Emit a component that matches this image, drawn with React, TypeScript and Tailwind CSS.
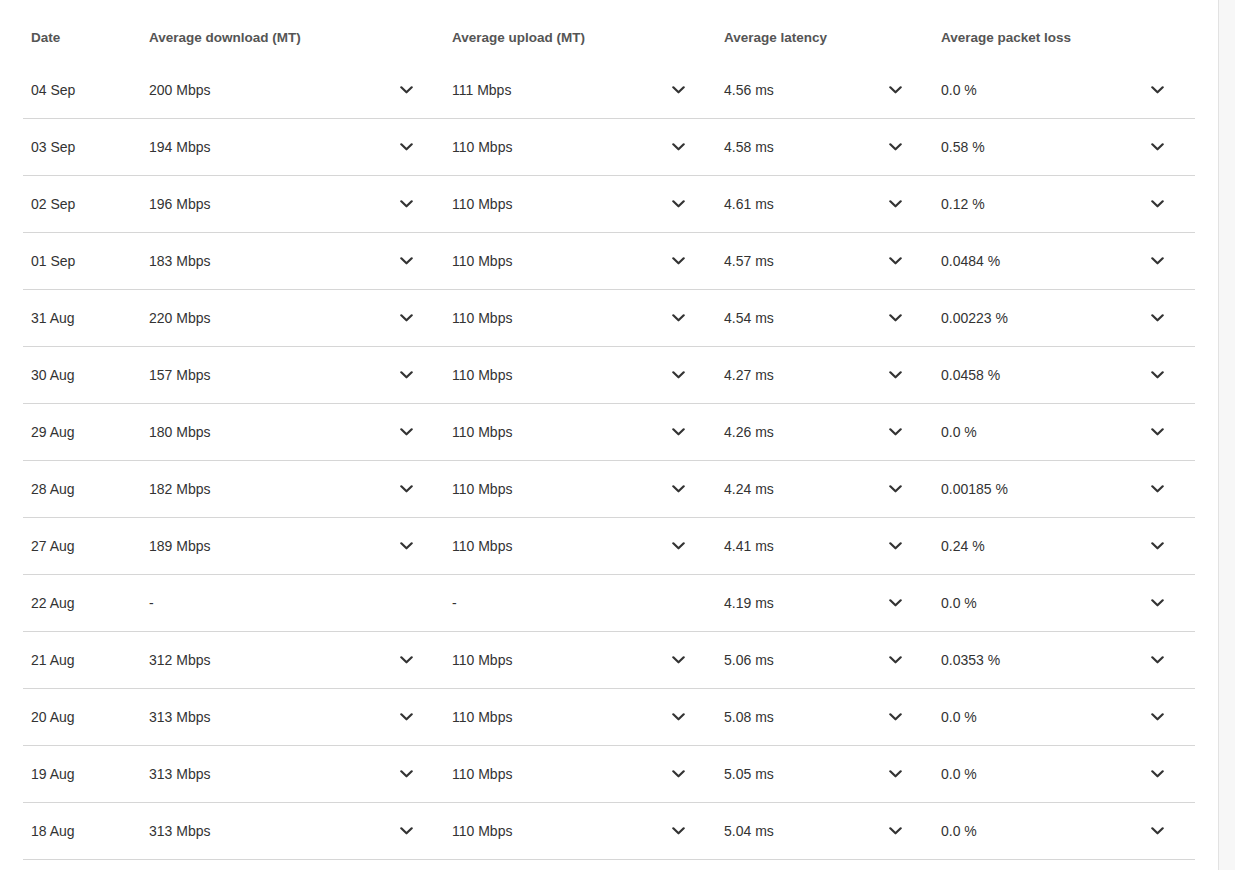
import React from "react";

type Row = { date: string; down: string; up: string; lat: string; loss: string };

const rows: Row[] = [
  { date: "04 Sep", down: "200 Mbps", up: "111 Mbps", lat: "4.56 ms", loss: "0.0 %" },
  { date: "03 Sep", down: "194 Mbps", up: "110 Mbps", lat: "4.58 ms", loss: "0.58 %" },
  { date: "02 Sep", down: "196 Mbps", up: "110 Mbps", lat: "4.61 ms", loss: "0.12 %" },
  { date: "01 Sep", down: "183 Mbps", up: "110 Mbps", lat: "4.57 ms", loss: "0.0484 %" },
  { date: "31 Aug", down: "220 Mbps", up: "110 Mbps", lat: "4.54 ms", loss: "0.00223 %" },
  { date: "30 Aug", down: "157 Mbps", up: "110 Mbps", lat: "4.27 ms", loss: "0.0458 %" },
  { date: "29 Aug", down: "180 Mbps", up: "110 Mbps", lat: "4.26 ms", loss: "0.0 %" },
  { date: "28 Aug", down: "182 Mbps", up: "110 Mbps", lat: "4.24 ms", loss: "0.00185 %" },
  { date: "27 Aug", down: "189 Mbps", up: "110 Mbps", lat: "4.41 ms", loss: "0.24 %" },
  { date: "22 Aug", down: "-", up: "-", lat: "4.19 ms", loss: "0.0 %" },
  { date: "21 Aug", down: "312 Mbps", up: "110 Mbps", lat: "5.06 ms", loss: "0.0353 %" },
  { date: "20 Aug", down: "313 Mbps", up: "110 Mbps", lat: "5.08 ms", loss: "0.0 %" },
  { date: "19 Aug", down: "313 Mbps", up: "110 Mbps", lat: "5.05 ms", loss: "0.0 %" },
  { date: "18 Aug", down: "313 Mbps", up: "110 Mbps", lat: "5.04 ms", loss: "0.0 %" },
];

function Chevron() {
  return (
    <svg width="13" height="8" viewBox="0 0 13 8" fill="none" className="shrink-0">
      <polyline points="1.3,1.3 6.5,6.3 11.7,1.3" stroke="#333333" strokeWidth="2.2" strokeLinecap="round" strokeLinejoin="round" />
    </svg>
  );
}

function Cell({ value, width, chevron }: { value: string; width: string; chevron: boolean }) {
  return (
    <div className={`${width} flex items-center justify-between pl-2 pr-[31px]`}>
      <span>{value}</span>
      {chevron && <Chevron />}
    </div>
  );
}

export default function App() {
  return (
    <div className="flex min-h-[870px] bg-white" style={{ fontFamily: '"Liberation Sans", Arial, sans-serif' }}>
      <div className="flex-1 px-[23px] pt-[14px]">
        <div className="w-[1172px]">
          <div className="flex h-[48px] items-center text-[13.5px] font-bold text-[#555555]">
            <div className="w-[118px] pl-2">Date</div>
            <div className="w-[303px] pl-2">Average download (MT)</div>
            <div className="w-[272px] pl-2">Average upload (MT)</div>
            <div className="w-[217px] pl-2">Average latency</div>
            <div className="w-[262px] pl-2">Average packet loss</div>
          </div>
          {rows.map((r) => {
            const has = r.down !== "-";
            return (
              <div key={r.date} className="flex h-[57px] items-center border-b border-[#d6d6d6] text-[14px] text-[#333333]">
                <div className="w-[118px] pl-2">{r.date}</div>
                <Cell value={r.down} width="w-[303px]" chevron={has} />
                <Cell value={r.up} width="w-[272px]" chevron={has} />
                <Cell value={r.lat} width="w-[217px]" chevron />
                <Cell value={r.loss} width="w-[262px]" chevron />
              </div>
            );
          })}
        </div>
      </div>
      <div className="w-[17px] shrink-0 border-l border-[#e2e2e2] bg-[#f7f7f7]" />
    </div>
  );
}
